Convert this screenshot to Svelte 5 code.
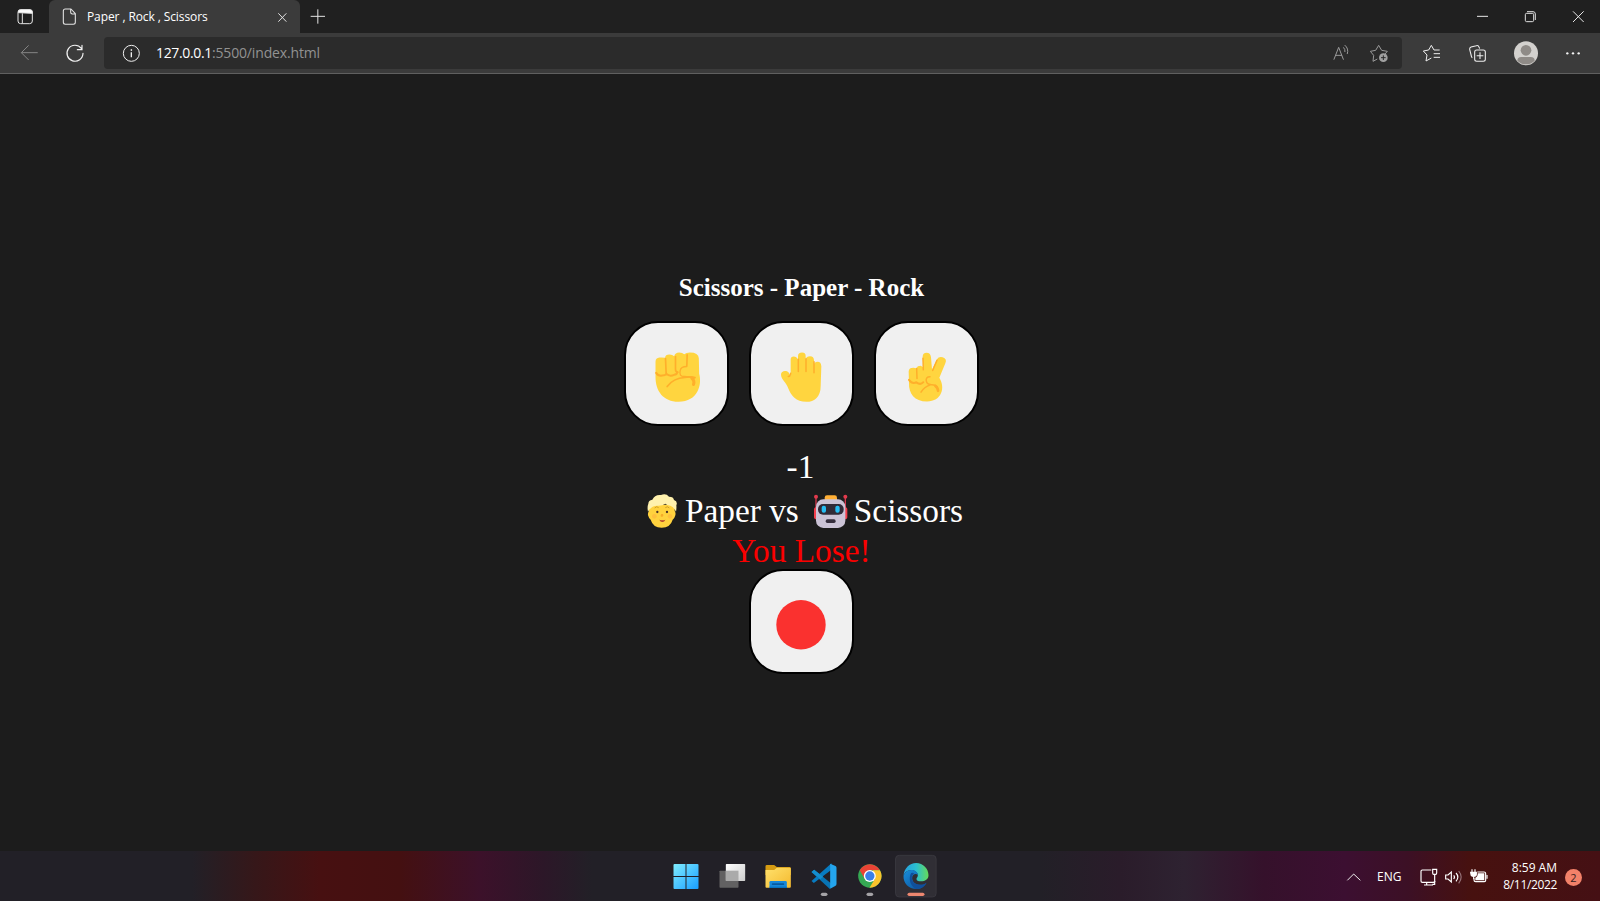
<script>
  let score = $state(-1);
  const player = 'Paper';
  const computer = 'Scissors';
</script>

<div class="screen">
  <header class="tabstrip">
    <svg class="w49" viewBox="0 0 147 99" fill="none" stroke="#e4e4e4" stroke-width="3">
      <rect x="54" y="30" width="43" height="41" rx="8" /><path d="M55 38V34q0-5 6-5h29q7 0 7 6v5z" fill="#fff" /><path d="M67 40v30" />
    </svg>
    <div class="tab">
      <svg class="doc" viewBox="177 0 84 99" fill="none" stroke="#e4e4e4" stroke-width="3.2" stroke-linejoin="round">
        <path d="M196 27h17l13 14v26q0 6-6 6h-24q-6 0-6-6V33q0-6 6-6zM212 28v9q0 5 5 5h9" />
      </svg>
      <span class="title">Paper , Rock , Scissors</span>
      <svg class="x" viewBox="822 0 78 99" fill="none" stroke="#e4e4e4" stroke-width="3"><path d="m835 40 24 25m0-25-24 25" /></svg>
    </div>
    <svg class="w36" viewBox="900 0 108 99" stroke="#e4e4e4" stroke-width="3"><path d="M932 49h43M953.500 28v43" /></svg>
    <div class="grow"></div>
    <svg class="w48" viewBox="444 0 144 99" stroke="#e8e8e8" stroke-width="3"><path d="M501 49h33" /></svg>
    <svg class="w48" viewBox="588 0 144 99" fill="none" stroke="#e0e0e0" stroke-width="3"><rect x="646" y="40" width="25" height="25" rx="4" /><path d="M651 35h18q7 0 7 7v18" /></svg>
    <svg class="w46" viewBox="732 0 138 99" stroke="#e8e8e8" stroke-width="3"><path d="m789 34 32 32m0-32-32 32" /></svg>
  </header>

  <nav class="toolbar">
    <svg class="w50" viewBox="0 99 150 120" fill="none" stroke="#858585" stroke-width="3" stroke-linecap="round" stroke-linejoin="round"><path d="M112 158H65m20-21-21 21 21 21" /></svg>
    <svg class="w54" viewBox="150 99 162 120" fill="none" stroke="#f2f2f2" stroke-width="3.500" stroke-linecap="round"><path d="M249 160a24 24 0 1 1-5-15M246 136v13h-14" /></svg>
    <div class="address">
      <svg class="info" viewBox="366 99 60 120" fill="none" stroke="#f0f0f0" stroke-width="3"><circle cx="394" cy="160" r="24" /><path d="M394 157v15" stroke-width="4" /><circle cx="394" cy="150" r="1.500" fill="#fff" /></svg>
      <span class="host">127.0.0.1</span><span class="path">:5500/index.html</span>
      <div class="grow"></div>
      <svg class="w38" viewBox="55 99 114 120" fill="none" stroke="#9a9a9a" stroke-width="3" stroke-linecap="round">
        <path d="m70 178 14-36 14 36m-23-12h18M99 143q5 5 4 12M103 136q12 10 7 25" />
      </svg>
      <svg class="w35" viewBox="169 99 105 120" fill="none" stroke="#9a9a9a" stroke-width="3" stroke-linejoin="round">
        <path d="m200 177-13 7 2-18-10-12 16-3 9-15 9 15 17 3-7 8" /><circle cx="218" cy="173" r="13" fill="#a0a0a0" stroke="none" /><path d="M211 173h14m-7-7v14" stroke="#2b2b2b" />
      </svg>
    </div>
    <svg class="w48" viewBox="294 99 144 120" fill="none" stroke="#eee" stroke-width="3" stroke-linejoin="round"><path d="m364 174-16 9 3-18-11-12 16-3 8-14 8 14h17M371 161h19m-19 11h19" /></svg>
    <svg class="w48" viewBox="438 99 144 120" fill="none" stroke="#eee" stroke-width="3.200" stroke-linejoin="round"><path d="M487 173q-2-1-3-5l-5-20q-1-5 4-7l16-4q6-2 8 4l2 5" /><rect x="494" y="150" width="32" height="34" rx="6" /><path d="M500 167h20m-10-10v20" /></svg>
    <svg class="w48" viewBox="582 99 144 120"><circle cx="648" cy="160" r="36" fill="#d3d1ce" /><circle cx="648" cy="151" r="16" fill="#8f8b87" /><path d="M622 182q0-11 12-11h28q12 0 12 11a36 36 0 0 1-52 0z" fill="#8f8b87" /></svg>
    <svg class="w48" viewBox="726 99 144 120" fill="#f4f4f4"><circle cx="772" cy="160" r="3.500" /><circle cx="789" cy="160" r="3.500" /><circle cx="806" cy="160" r="3.500" /></svg>
  </nav>

  <main>
    <h1>Scissors - Paper - Rock</h1>
    <div class="choices">
      <button aria-label="Rock">
        <svg viewBox="4.500 -3.600 210 210">
          <path d="M45 65q0-12 12-13 9-1 17 1 0-10 13-10 9 0 14 5 3-11 15-11 10 0 15 5 6-5 17-5 26 0 27 17l1 47c9 32-3 84-62 84-46 0-69-32-69-75z" fill="#ffd53f" />
          <g fill="none" stroke="#ffaf2b" stroke-linecap="round" stroke-linejoin="round">
            <path d="M75 55l2 45M105 49v38q0 9 7 9M140 44l-1 32" stroke-width="5" />
            <path d="M47 98q6 10 18 8 9 0 13-5 9 9 23 3 8-1 9-7" stroke-width="6" />
            <path d="M139 79q-18 0-20 12-4 18 12 18l33 3" stroke-width="4" />
            <path d="M80 139q18-25 53-27 17-4 29 1" stroke-width="5" />
            <path d="M154 114q9 7 5 19" stroke-width="9" />
          </g>
        </svg>
      </button>
      <button aria-label="Paper">
        <svg viewBox="-9 -3.600 210 210">
          <path d="M62 108V58q0-9 9-9t13 9V48q0-11 12-11t11 12v8q2-9 13-9 12 0 12 13v12q1-8 11-8t11 13l-2 60c0 31-18 47-43 47-31 0-46-19-54-40-8-21-22-27-22-42 0-11 15-14 23-6z" fill="#ffd53f" />
          <path d="M62 99q-1 10-7 10M85 57v37M108 56v38M132 65v33" fill="none" stroke="#ffaf2b" stroke-width="4.500" stroke-linecap="round" />
        </svg>
      </button>
      <button aria-label="Scissors">
        <svg viewBox="-9 -3.600 210 210">
          <path d="M41 93q1-10 14-10l9 1q3-7 13-7l8 4-2-31q0-12 12-12 11 0 13 13l3 37 15-31q5-9 17-6 14 5 8 18l-18 44c19 30 7 71-37 71-38 0-55-25-54-55z" fill="#ffd53f" />
          <g fill="none" stroke="#ffaf2b" stroke-linecap="round" stroke-linejoin="round">
            <path d="M65 85l1 30M84 54l1 35M126 60l-13 31" stroke-width="4.500" />
            <path d="M42 119q10 14 22 7 12 10 21 0" stroke-width="6" />
            <path d="M105 110q-14 0-11 13 2 10 13 10M78 156q9-16 28-22 13-2 20 6" stroke-width="4.500" /><path d="M121 137q8 6 8 15" stroke-width="8" />
          </g>
        </svg>
      </button>
    </div>
    <p class="score">{score}</p>
    <p class="versus">
      <svg class="face" viewBox="36 145 90 105">
        <path d="M42 177h77v19q4 5 2 13-2 9-8 13-7 24-33 24t-33-24q-6-5-8-13-1-8 3-13z" fill="#ffd23e" />
        <path d="M39 198q-3-14 1-24 0-11 12-12 7-16 26-14 15-6 24 5 14 0 15 10 12 4 7 16 1 9-1 19-7-15-17-18-11-1-15-6-9 7-24 6-18 0-28 18z" fill="#fff1ad" />
        <path d="M59 187q6-7 12-1M91 186q6-6 12 1" fill="none" stroke="#b78420" stroke-width="2" /><circle cx="67" cy="199" r="3.500" fill="#493126" /><circle cx="96" cy="199" r="3.500" fill="#493126" />
        <circle cx="58" cy="212" r="7" fill="#ffc03d" /><circle cx="105" cy="212" r="7" fill="#ffc03d" /><path d="M79 205q-5 9 2 8 6 0 3-8" fill="#f5ab28" /><path d="M73 222q9 4 18 0-3 7-9 7t-9-7z" fill="#b33f2c" />
      </svg>
      <span class="player">{player} vs</span>
      <svg class="robot" viewBox="534 145 105 105">
        <path d="M543 154v36M631 154v36" stroke="#d4364d" stroke-width="4" /><circle cx="543" cy="153" r="6" fill="#e23b4d" /><circle cx="631" cy="153" r="6" fill="#e23b4d" />
        <rect x="537" y="184" width="100" height="37" rx="8" fill="#f33f4d" /><rect x="569" y="149" width="37" height="20" rx="7" fill="#ffaf35" /><rect x="543" y="161" width="88" height="86" rx="22" fill="#cbc3d6" />
        <rect x="549" y="175" width="77" height="32" rx="15" fill="#302b38" /><rect x="560" y="180" width="13" height="21" rx="6" fill="#26bdf3" /><rect x="601" y="180" width="13" height="21" rx="6" fill="#26bdf3" /><rect x="572" y="221" width="30" height="11" rx="5" fill="#352e3d" />
      </svg>
      <span>{computer}</span>
    </p>
    <p class="result">You Lose!</p>
    <button aria-label="Reset"><svg viewBox="0 0 70 70"><circle cx="34" cy="37.700" r="24.700" fill="#fa312f" /></svg></button>
  </main>

  <footer>
    <div></div>
    <div class="apps">
      <svg viewBox="10.500 18 138 150">
        <defs><linearGradient id="win" x2="1" y2="1"><stop stop-color="#80edff" /><stop offset="1" stop-color="#189dff" /></linearGradient></defs>
        <path d="M45 57h33v36H42V60q0-3 3-3zm36 0h33q3 0 3 3v33H81zM42 96h36v36H45q-3 0-3-3zm39 0h36v33q0 3-3 3H81z" fill="url(#win)" />
      </svg>
      <svg viewBox="148.500 18 138 150">
        <defs><linearGradient id="view" x2="1" y2="1"><stop stop-color="#fff" /><stop offset="1" stop-color="#ccc" /></linearGradient></defs>
        <rect x="180" y="77" width="57" height="51" rx="2" fill="#626162" /><rect x="199" y="57" width="58" height="51" rx="2" fill="url(#view)" /><path d="M199 77h38v31h-38z" fill="#aaa" />
      </svg>
      <svg viewBox="286.500 18 138 150">
        <defs><linearGradient id="folder" x2="1" y2="1"><stop stop-color="#ffe16c" /><stop offset="1" stop-color="#f4b92e" /></linearGradient></defs>
        <path d="M318 64q0-4 4-4h22l8 6h38q4 0 4 4v20h-76z" fill="#d59b12" /><path d="M318 75h26l8-7h39q3 0 3 3v54q0 3-3 3h-70q-3 0-3-3z" fill="url(#folder)" /><path d="M330 128v-16q0-4 4-4h44q4 0 4 4v16z" fill="#1687d9" /><rect x="337" y="115" width="37" height="5" rx="2" fill="#075a9f" /><path d="M330 125h52v4h-52z" fill="#0870bd" />
      </svg>
      <svg viewBox="424.500 18 138 150">
        <path d="m456 108 7 6 53-40V55z" fill="#087bc1" /><path d="m456 81 8-7 54 44-7 14z" fill="#0874b5" /><path d="m512 56 16 7q3 2 3 5v49q0 4-4 6l-15 8z" fill="#24a5ee" /><path d="m456 81 8-7 27 21-9 8z" fill="#148dcd" /><rect x="484" y="143" width="20" height="10" rx="5" fill="#a5a3a7" />
      </svg>
      <svg viewBox="562.500 18 138 150">
        <circle cx="631" cy="93" r="35" fill="#35a853" /><path d="M600.700 75.500A35 35 0 0 1 661.300 75.500H631L616 102z" fill="#e94335" /><path d="M661.300 75.500A35 35 0 0 1 630 128l16-26-6-26.500z" fill="#fbc32c" /><circle cx="631" cy="93" r="18" fill="#fff" /><circle cx="631" cy="93" r="14" fill="#397fe9" /><rect x="621" y="143" width="20" height="10" rx="5" fill="#a5a3a7" />
      </svg>
      <svg viewBox="700.500 18 138 150">
        <defs><linearGradient id="edgeTop" x2="1"><stop stop-color="#269ee0" /><stop offset=".5" stop-color="#2bbfd0" /><stop offset="1" stop-color="#65db59" /></linearGradient><linearGradient id="edgeLow" x2="1" y2="1"><stop stop-color="#188edb" /><stop offset="1" stop-color="#0b4d96" /></linearGradient></defs>
        <rect x="708" y="31" width="122" height="125" rx="11" fill="#302e35" stroke="#403e45" stroke-width="2" />
        <path d="M732 92c2-22 18-38 38-38 21 0 37 17 37 37 0 13-11 18-22 18-10 0-14-3-14-7 0-4 4-4 4-11 0-8-9-16-19-16-13 0-21 8-24 17z" fill="url(#edgeTop)" />
        <path d="M732 92c4-11 13-17 24-17 10 0 18 6 19 14-8-5-17 0-17 10 0 14 13 22 29 20 6-1 10-3 14-6-6 12-17 19-31 19-22 0-39-18-38-40z" fill="url(#edgeLow)" /><path d="M755 84c-9 16-3 40 15 48 13 0 24-6 31-19-5 5-11 6-18 6-16 0-26-9-26-20 0-6 2-10 7-13q-4-4-9-2z" fill="#104f9b" />
        <rect x="744" y="143" width="51" height="10" rx="5" fill="#ed8770" />
      </svg>
    </div>
    <div class="tray">
      <svg class="chev" viewBox="45 18 90 150" fill="none" stroke="#eee" stroke-width="3"><path d="m52 103 19-19 20 19" /></svg>
      <span class="lang">ENG</span>
      <svg class="status" viewBox="264 18 222 150" fill="none" stroke="#fff" stroke-width="3.500">
        <path d="M304 72h-27q-4 0-4 4v29q0 4 4 4h31q6 0 8-4M290 109v8m-8 0h27M308 70h12v11q0 4-3 4h-6q-3 0-3-4zM314 85v30h-7" />
        <path d="M347 87h7l10-9v30l-10-9h-7zM371 88q5 5 0 11M378 81q11 12 0 25" /><path d="M386 75q15 18 0 37" stroke="#957178" />
        <path d="M442 78h20q5 0 5 5v20q0 4-4 4h-26q-5 0-5-5v-5" /><path d="M443 82h20v21h-27v-8q8-3 7-13z" fill="#fff" stroke="none" /><path d="M471 87v11M426 70v8m9-8v8" /><path d="M422 79h17v6q0 6-8 6t-8-6zM431 91v8" fill="#fff" />
      </svg>
      <div class="clock"><span class="time">8:59 AM</span><span>8/11/2022</span></div>
      <span class="badge">2</span>
    </div>
  </footer>
</div>

<style>
  :global(body) { margin: 0; background: #1c1c1c; overflow: hidden; }
  .screen { width: 1600px; height: 901px; display: flex; flex-direction: column; background: #1c1c1c; font-family: "Open Sans", "Noto Sans", sans-serif; }
  svg { display: block; flex: none; }
  .grow { flex: 1; }
  .w35 { width: 35px; } .w36 { width: 36px; } .w38 { width: 38px; } .w46 { width: 46px; }
  .w48 { width: 48px; } .w49 { width: 49px; } .w50 { width: 50px; } .w54 { width: 54px; }
  .tabstrip { height: 33px; display: flex; background: #202020; }
  .tabstrip > svg, .tab svg { height: 33px; }
  .tab { width: 251px; display: flex; align-items: center; background: #3b3b3b; border-radius: 6px 6px 0 0; box-sizing: border-box; padding-left: 10px; }
  .doc { width: 28px; }
  .title { width: 187px; color: #fff; font-size: 12px; line-height: 33px; letter-spacing: -0.1px; white-space: nowrap; }
  .x { width: 26px; }
  .toolbar { height: 40px; display: flex; background: #3b3b3b; border-bottom: 1px solid #606060; }
  .toolbar svg { height: 40px; }
  .address { width: 1298px; height: 32px; margin: 4px 6px 0 0; display: flex; align-items: center; background: #2b2b2b; border-radius: 4px; box-sizing: border-box; padding-left: 18px; font-size: 14px; white-space: nowrap; }
  .info { width: 20px; margin-right: 14px; }
  .host, .path { line-height: 32px; }
  .host { color: #fff; letter-spacing: -0.35px; }
  .path { color: #929292; letter-spacing: -0.15px; }
  main { height: 777px; display: flex; flex-direction: column; align-items: center; color: #fff; font-family: "Liberation Serif", serif; font-size: 33.333px; padding: 200px 0 0 3px; box-sizing: border-box; }
  h1 { margin: 0; font-size: 25px; line-height: 28px; }
  .choices { display: flex; gap: 20px; margin-top: 19px; }
  button { width: 105px; height: 105px; box-sizing: border-box; border: 2px solid #000; border-radius: 34px; background: #f0f0f0; padding: 0; display: grid; place-items: center; flex: none; }
  button svg { width: 70px; height: 70px; }
  p { margin: 0; white-space: nowrap; }
  .score { margin-top: 21px; line-height: 40px; padding-right: 2px; }
  .versus { height: 48px; line-height: 48px; display: flex; align-items: center; padding-left: 7px; }
  .face { width: 30px; height: 35px; }
  .player { margin: 0 14px 0 8px; }
  .robot { width: 35px; height: 35px; margin-right: 6px; }
  .result { color: #fa0000; line-height: 38px; margin: -3px 0 -1px; }
  footer { height: 50px; display: grid; grid-template-columns: 663px 276px 1fr; background: linear-gradient(90deg, #222027 0, #222027 12%, #361719 16%, #471011 20%, #441011 25%, #3c112a 30%, #2c1728 34%, #222027 37%, #222027 65%, #2a1c2a 70%, #2e2231 74%, #35112b 79%, #3c0f31 84%, #3c1025 88%, #47110f 92%, #451014 100%); }
  .apps { display: flex; }
  .apps svg { width: 46px; height: 50px; }
  .tray { display: flex; align-items: center; justify-content: flex-end; color: #fff; font-size: 12px; padding-right: 18px; }
  .tray svg { height: 50px; }
  .chev { width: 30px; }
  .lang { width: 25px; margin: 0 16px 0 2px; line-height: 52px; }
  .status { width: 74px; }
  .clock { width: 65px; display: flex; flex-direction: column; text-align: right; line-height: 16.7px; letter-spacing: -0.35px; }
  .time { letter-spacing: 0; }
  .badge { width: 17px; height: 17px; border-radius: 50%; margin-left: 8px; background: #f38169; color: #36201e; font-size: 11px; line-height: 17px; text-align: center; }
</style>
